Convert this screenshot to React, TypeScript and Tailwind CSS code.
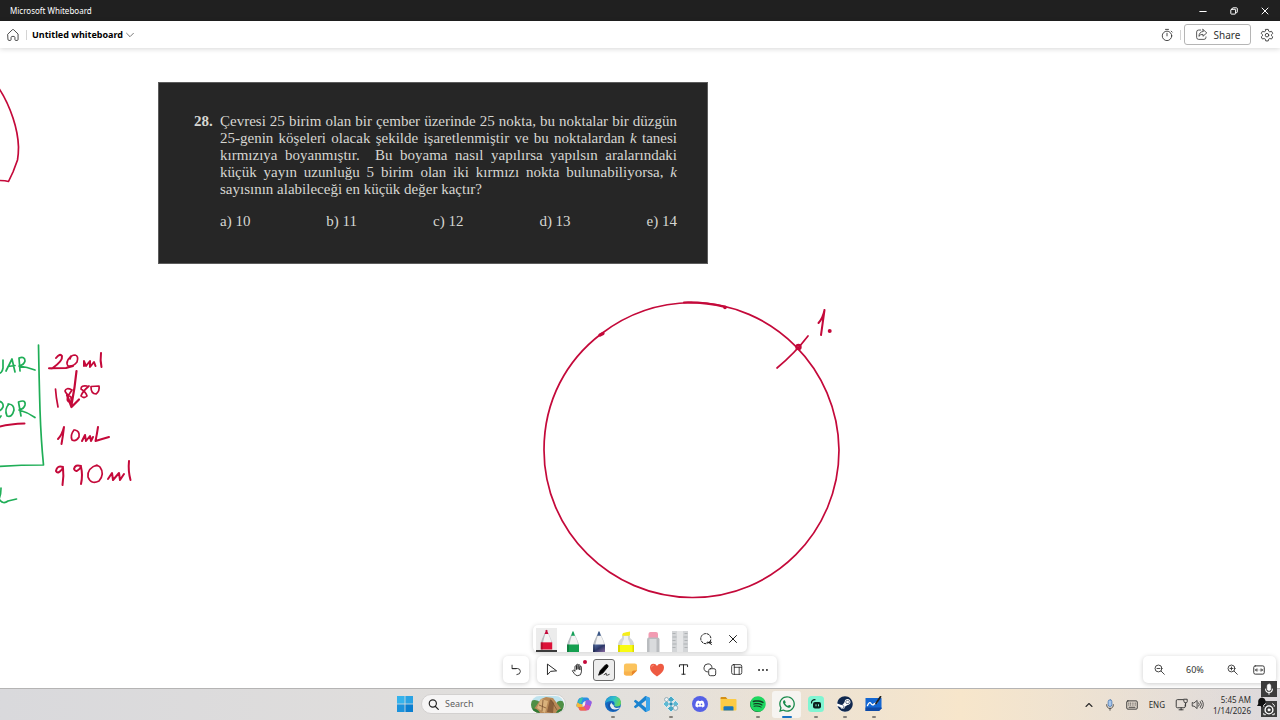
import type { ReactNode } from "react";
import { FaDiscord, FaSpotify, FaWhatsapp, FaSteam } from "react-icons/fa6";

const RED = "#c4093a";
const GREEN = "#1fae57";

const QUESTION_LINES: ReactNode[] = [
  "Çevresi 25 birim olan bir çember üzerinde 25 nokta, bu noktalar bir düzgün",
  <>25-genin köşeleri olacak şekilde işaretlenmiştir ve bu noktalardan <i>k</i> tanesi</>,
  "kırmızıya boyanmıştır.  Bu boyama nasıl yapılırsa yapılsın aralarındaki",
  <>küçük yayın uzunluğu 5 birim olan iki kırmızı nokta bulunabiliyorsa, <i>k</i></>,
];

const ANSWERS = ["a) 10", "b) 11", "c) 12", "d) 13", "e) 14"];

function Icon({ children, className = "w-4 h-4", box = 16 }: { children: ReactNode; className?: string; box?: number }) {
  return (
    <svg
      viewBox={`0 0 ${box} ${box}`}
      className={`${className} shrink-0`}
      fill="none"
      stroke="currentColor"
      strokeWidth="1"
      strokeLinecap="round"
      strokeLinejoin="round"
      aria-hidden="true"
    >
      {children}
    </svg>
  );
}

function TitleBar() {
  return (
    <div className="h-[21px] shrink-0 bg-[#202020] text-white flex items-center justify-between pl-[10px]">
      <span className="text-[8px] leading-3">Microsoft Whiteboard</span>
      <div className="flex items-center">
        <button aria-label="Minimize" className="w-[31px] h-[21px] flex items-center justify-center">
          <Icon className="w-2 h-2" box={8}>
            <path d="M0.8 4.5h6.4" />
          </Icon>
        </button>
        <button aria-label="Restore" className="w-[31px] h-[21px] flex items-center justify-center">
          <Icon className="w-2 h-2" box={8}>
            <rect x="0.8" y="2.3" width="4.8" height="4.8" rx="0.6" />
            <path d="M2.4 2.2V1.5q0-.7.7-.7h3.4q.8 0 .8.8v3.3q0 .7-.7.7H5.8" />
          </Icon>
        </button>
        <button aria-label="Close" className="w-[31px] h-[21px] flex items-center justify-center">
          <Icon className="w-2 h-2" box={8}>
            <path d="M1 1l6 6M7 1L1 7" />
          </Icon>
        </button>
      </div>
    </div>
  );
}

function Header() {
  return (
    <header className="relative z-10 h-[27px] shrink-0 bg-white shadow-[0_1px_5px_rgba(0,0,0,0.16)] flex items-center justify-between px-[6px] text-[#333333]">
      <div className="flex items-center">
        <button aria-label="Home">
          <Icon className="w-[14px] h-[14px]">
            <path d="M2.2 6.9 7.2 2q.8-.7 1.6 0l5 4.9v6.2q0 1.1-1.1 1.1h-1.5q-1 0-1-1v-2.4q0-1.3-2.2-1.3t-2.2 1.3v2.4q0 1-1 1H3.3q-1.1 0-1.1-1.1z" />
          </Icon>
        </button>
        <span className="ml-[6px] mr-[5px] w-px h-[10px] bg-[#d4d4d4]" />
        <button className="flex items-center gap-[3px] text-black">
          <span className="text-[9px] leading-4 font-bold">Untitled whiteboard</span>
          <Icon className="w-2 h-2 text-[#555555]" box={8}>
            <path d="M0.6 2.3 4 5.7l3.4-3.4" strokeWidth="0.8" />
          </Icon>
        </button>
      </div>
      <div className="flex items-center">
        <button aria-label="Timer">
          <Icon className="w-[14px] h-[14px]">
            <circle cx="8" cy="9" r="5.4" />
            <path d="M8 6V9M6.3 1.6h3.4M12.8 3.6l1.1 1.1" />
          </Icon>
        </button>
        <span className="ml-[6px] mr-[3px] w-px h-[10px] bg-[#d4d4d4]" />
        <button className="w-[67px] h-[21px] rounded-[3px] border border-[#b5b5b5] flex items-center justify-center gap-[6px]">
          <Icon className="w-[13px] h-[13px]">
            <path d="M7 2.5H4.5Q2 2.5 2 5v6.5Q2 14 4.5 14H11q2.5 0 2.5-2.5V11" />
            <path d="M9.8 1.8 14.5 6l-4.7 4.2V7.8Q6.5 7.6 4.8 10.3 5.2 4.6 9.8 4.3z" />
          </Icon>
          <span className="text-[10px] leading-4">Share</span>
        </button>
        <button aria-label="Settings" className="ml-[9px]">
          <Icon className="w-[14px] h-[14px]">
            <path d="M6.6 1.6h2.8l.5 2 1.3.8 2-.6 1.4 2.4-1.5 1.4v1.2l1.5 1.4-1.4 2.4-2-.6-1.300.8-.5 2H6.6l-.5-2-1.3-.8-2 .6-1.400-2.400 1.500-1.400V7.600L1.400 6.200l1.400-2.400 2 .6 1.300-.8z" />
            <circle cx="8" cy="8.200" r="2" />
          </Icon>
        </button>
      </div>
    </header>
  );
}

function QuestionCard() {
  return (
    <article className="absolute left-[158px] top-[34px] w-[550px] border border-[#5c5c5c] bg-[#262626] text-[#d6d6d2] pl-[35px] pr-[30px] pt-[30px] pb-[33px] font-['Liberation_Serif',serif] text-[15px] leading-[17px]">
      <div className="flex">
        <b className="w-[26px] shrink-0">28.</b>
        <div className="flex-1">
          {QUESTION_LINES.map((line, i) => (
            <p key={i} className="whitespace-pre-wrap [text-align-last:justify]">
              {line}
            </p>
          ))}
          <p>sayısının alabileceği en küçük değer kaçtır?</p>
          <div className="flex justify-between mt-[15px]">
            {ANSWERS.map((answer) => (
              <span key={answer}>{answer}</span>
            ))}
          </div>
        </div>
      </div>
    </article>
  );
}

// Pen strokes, in window coordinates: the view box starts under the two top bars
function Ink() {
  return (
    <svg
      viewBox="0 48 900 640"
      width="900"
      height="640"
      className="absolute left-0 top-0"
      fill="none"
      strokeWidth="1.7"
      strokeLinecap="round"
      strokeLinejoin="round"
      aria-hidden="true"
    >
      <g stroke={RED}>
        <path d="M-2 87Q7 100 13 118 18 133 18.5 147 18.5 154 17.5 160L13 172 8.5 181.5Q5 180.5-2 180.5" />
        <path d="M692 302.5C773 303 838 369 839 450 839 532 773 598 692 597.5 610 597 544 531 544 450 544 400 567 360 601 334 627 314 657 303 692 302.5" />
        <path d="M684 302.5Q706 302 725 307" strokeWidth="2.2" />
        <circle cx="725" cy="307.3" r="1" />
        <path d="M600 335l3-1.500" strokeWidth="3.200" />
        <path d="M777 368Q795 353 808 336" />
        <circle cx="798.500" cy="347" r="2" strokeWidth="2.400" />
        <path d="M818.500 323Q823 318 824.500 310L821 335" strokeWidth="2" />
        <circle cx="829.700" cy="331" r="1" strokeWidth="2" />
        {/* 20ml */}
        <path d="M56 358Q60 353 62 356 63 361 52 368.500L49 368.300Q58 368 66 368L73 366" strokeWidth="2" />
        <path d="M71 356Q65 362 68 366 73 367 77 362 79 356 75 355 71 355 70 359" />
        <path d="M84 366V361L86 366 90 361V367L94 362 95.500 366M101 353Q100 361 101.500 367" strokeWidth="2" />
        <path d="M76.500 371Q75 387 71.500 405M67 395 71.500 407 79 399.500M71.500 407V398" strokeWidth="2.200" />
        {/* 1880 */}
        <path d="M55.500 389Q56 397 58 407" />
        <path d="M72 390Q66 387 65 391 66 394 71 397 73 402 70 402 66 402 68 396L72 390" />
        <path d="M87 386Q81 385 81 389 86 392 87 396 84 399 81 396 82 392 89 386" />
        <path d="M91 386.500 99 386Q100 391 96 394 91 394 91 387" />
        {/* 10mL */}
        <path d="M58 439Q62 435 64 427 63 436 61.500 444" strokeWidth="2" />
        <path d="M74 430Q70 435 72 440 76 442 79 437 80 431 75 430" />
        <path d="M82 441 85 435 86 441 90 436 91 441 93 437M98 427Q97 434 95.500 441 102 439 109 437" strokeWidth="2" />
        {/* 990ml */}
        <path d="M63 467Q57 465 56 471 58 475 63 468 64 476 62.500 485" strokeWidth="2" />
        <path d="M81 466Q75 464 74 469 76 474 81 467 83 475 81 484" strokeWidth="2" />
        <path d="M97 465Q87 468 88 477 91 485 99 481 105 474 100 467 98 465 95 466" />
        <path d="M108 479 112 473 113 480 119 473 120 480 124 474M129 461Q128 471 130.500 480" strokeWidth="2" />
        <path d="M-2 427Q9 424 24.500 423.500" strokeWidth="2" />
      </g>
      <g stroke={GREEN}>
        <path d="M38.500 345Q39 375 40 410 41 440 43.500 465Q20 465-2 466.500" />
        <path d="M3 360V368Q2 374-2 373" />
        <path d="M6 371 12 359 15 372M8 366.500 15 365.500" />
        <path d="M20 371 19 358Q25 356 25 361 24 365 19 366 27 367 35 370" />
        <path d="M-2 401Q4 402 3 407 1 411-2 411M-2 420 1 416" />
        <path d="M9 404Q4 409 7 416 12 418 14 410 14 404 8 404" />
        <path d="M21 416 18.500 402Q26 399 25 405 24 409 19 410 27 412 35 417.500" />
        <path d="M1 488Q1 495-1 499 3 505 8 501L16.500 499" />
      </g>
    </svg>
  );
}

function Pen({ tip, band, body }: { tip: string; band: string; body: string }) {
  return (
    <svg viewBox="0 0 22 22" className="w-[22px] h-[22px]" aria-hidden="true">
      <path d="M5 22V15Q5.500 12 9 5h4q3.500 7 4 10v7z" fill={body} />
      <path d="M9 5Q6 11 5 15v7h2.500V14Q9 8 10 5z" fill="#b9bdc2" />
      <path d="M12.500 5q3 6 3.500 10h1Q16.500 12 13 5z" fill="#c8ccd0" />
      <path d="M9 5.800 10.400 1.800q.6-1.200 1.200 0L13 5.800z" fill={tip} />
      <path d="M5 14.500h12V22H5z" fill={band} />
      <path d="M5 14.500h2V22H5z" fill="#000000" opacity=".2" />
    </svg>
  );
}

function PenBar() {
  return (
    <div className="w-[214px] h-[27px] rounded-[5px] bg-white shadow-[0_1px_5px_rgba(0,0,0,0.2)] flex justify-between items-center px-[3px]">
      <button aria-label="Red pen" className="w-[21px] h-[24px] mt-[2px] bg-[#ececec] border-b-2 border-[#3b3b3b] flex items-end justify-center">
        <Pen tip="#c4093a" band="#dc1239" body="#f4f4f4" />
      </button>
      <button aria-label="Green pen" className="w-[22px] h-[26px] pt-[4px] overflow-hidden">
        <Pen tip="#16a05a" band="#15a050" body="#f4f4f4" />
      </button>
      <button aria-label="Galaxy pen" className="w-[22px] h-[26px] pt-[4px] overflow-hidden">
        <svg width="0" height="0" className="absolute">
          <linearGradient id="galaxy" x1="0" x2="1" y1="0" y2="1">
            <stop offset="0" stopColor="#5d78ad" />
            <stop offset=".5" stopColor="#2b3768" />
            <stop offset="1" stopColor="#8c6aa0" />
          </linearGradient>
        </svg>
        <Pen tip="#3a5685" band="url(#galaxy)" body="#f4f4f4" />
      </button>
      <button aria-label="Yellow highlighter" className="w-[22px] h-[26px] pt-[4px]">
        <svg viewBox="0 0 22 22" className="w-[22px] h-[22px]" aria-hidden="true">
          <path d="M7.500 6 8 3.500 14 2v4z" fill="#f3ea1c" />
          <path d="M7 5.500h8V8q4 3 4 7v7H3v-7q0-4 4-7z" fill="#d3d6d9" />
          <path d="M9 6h4v3q2 3 2 6H7q0-3 2-6z" fill="#f1f2f3" />
          <path d="M3 15h16v7H3z" fill="#f9fb13" />
          <path d="M3 15h2v7H3zM17.500 15H19v7h-1.500z" fill="#dcd900" />
          <path d="M7 5.500 8 3l7-1.500v4z" fill="#f6ee1a" />
        </svg>
      </button>
      <button aria-label="Eraser" className="w-[22px] h-[26px] pt-[4px]">
        <svg viewBox="0 0 22 22" className="w-[22px] h-[22px]" aria-hidden="true">
          <path d="M6.500 9V4q0-2 2-2H14q2 0 2 2v5z" fill="#f29bb2" />
          <path d="M5 9.500Q5 7.500 7 7.500h8.500q2 0 2 2V22H5z" fill="#b9bcbf" />
          <path d="M7.500 9h7v13h-7z" fill="#d9dbdd" />
        </svg>
      </button>
      <button aria-label="Ruler" className="w-[22px] h-[26px] pt-[4px]">
        <svg viewBox="0 0 22 22" className="w-[22px] h-[22px]" aria-hidden="true">
          <path d="M3 1h16v21H3z" fill="#d3d5d7" />
          <path d="M8 1h6v21H8z" fill="#e6e7e8" />
          <path d="M3.500 3.500h3M3.500 7h4M3.500 10.500h3M3.500 14h4M3.500 17.500h3M18.500 3.500h-3M18.500 7h-4M18.500 10.500h-3M18.500 14h-4M18.500 17.500h-3" stroke="#a6a9ac" strokeWidth=".8" />
        </svg>
      </button>
      <button aria-label="Lasso select" className="w-[22px] h-[22px] flex items-center justify-center">
        <Icon className="w-[14px] h-[14px]">
          <path d="M8 13.400A5.800 5.800 0 1 1 13.600 7.500" strokeDasharray="2.400 1.500" />
          <path d="M13.500 9q-.2 1.600-1.600 2.700-2.600 1.800-2.900.5 0-1.400 2-.3l3.200 2.300M11.900 11.700q1.800-1.100 2.300 0 .1 1.200-1.600.8" />
        </Icon>
      </button>
      <button aria-label="Close pens" className="w-[22px] h-[22px] flex items-center justify-center">
        <Icon className="w-[14px] h-[14px]">
          <path d="M4 4l8 8M12 4l-8 8" />
        </Icon>
      </button>
    </div>
  );
}

function Tool({ label, children, active = false }: { label: string; children: ReactNode; active?: boolean }) {
  return (
    <button
      aria-label={label}
      aria-pressed={active}
      className={`relative w-[22px] h-[22px] flex items-center justify-center ${
        active ? "rounded-[3px] border border-[#6b6b6b] bg-[#ededed]" : ""
      }`}
    >
      {children}
    </button>
  );
}

function MainTools() {
  return (
    <div className="flex gap-[8px] text-[#242424]">
      <div className="w-[26px] h-[27px] rounded-[5px] bg-white shadow-[0_1px_5px_rgba(0,0,0,0.2)] flex items-center justify-center">
        <Tool label="Undo">
          <Icon className="w-[14px] h-[14px]">
            <path d="M3.500 2.500v4H8M3.800 6.300h6q3.200.3 3.200 3.400 0 3.300-4 3.600" />
          </Icon>
        </Tool>
      </div>
      <div className="w-[240px] h-[27px] rounded-[5px] bg-white shadow-[0_1px_5px_rgba(0,0,0,0.2)] flex items-center justify-between px-[3px]">
        <Tool label="Select">
          <Icon className="w-[13px] h-[13px]">
            <path d="M3 1.800v12.700l3.900-4.200 6.900-.6z" strokeWidth="1.200" />
          </Icon>
        </Tool>
        <Tool label="Pan">
          <Icon className="w-[14px] h-[14px]">
            <path d="M4.500 9V4.200q0-1 .9-1t.9 1V7.500 2.400q0-1 .9-1t.9 1V7.300 2.800q0-1 1-1t1 1V8 4.700q0-1 .9-1t.9 1v5.400q0 4.400-4.200 4.400-2.500 0-3.800-2.200L1.500 8.900q1.300-1.500 3 .1" />
          </Icon>
          <span className="absolute right-[2px] top-px w-1 h-1 rounded-full bg-[#c4093a]" />
        </Tool>
        <Tool label="Inking" active>
          <Icon className="w-[14px] h-[14px]">
            <path d="M2 13.500 3.800 8.600 9.700 2.200q1.400-1 2.500.2 1 1.200 0 2.400L6.600 11.500z" fill="#000000" stroke="#000000" />
            <path d="M8 13.500q1.800-2.200 2.500-1.800.6.600-.3 1.900 1.300 1 3.800-.5" />
          </Icon>
        </Tool>
        <Tool label="Sticky note">
          <svg viewBox="0 0 16 16" className="w-[15px] h-[15px]" aria-hidden="true">
            <path d="M1 4q0-2.500 2.500-2.500h9Q15 1.500 15 4v5l-5.500 5.500h-6Q1 14.500 1 12z" fill="#fbc35c" />
            <path d="M1 10v2q0 2.500 2.500 2.500h6V10z" fill="#f9b24c" />
            <path d="M15 9h-3.500q-2 0-2 2v3.500z" fill="#e8862a" />
          </svg>
        </Tool>
        <Tool label="Reactions">
          <svg viewBox="0 0 16 16" className="w-4 h-4" aria-hidden="true">
            <path d="M8 14.500Q1 10 1 5.700 1 1.800 4.500 1.800 6.800 1.800 8 4q1.200-2.200 3.500-2.200Q15 1.800 15 5.700 15 10 8 14.500z" fill="#ee5a42" />
            <path d="M2.500 5q.3-1.700 2-1.800" stroke="#f78c75" strokeLinecap="round" fill="none" />
          </svg>
        </Tool>
        <Tool label="Text">
          <Icon className="w-[13px] h-[13px]">
            <path d="M3 4.500V2.200h10v2.300M8 2.200v11.600M6 13.800h4" strokeWidth="1.200" />
          </Icon>
        </Tool>
        <Tool label="Shapes">
          <Icon className="w-[14px] h-[14px]">
            <path d="M5.200 10.200A4.600 4.600 0 1 1 10.300 5.300" />
            <rect x="6.500" y="6.500" width="8" height="8" rx="2" />
          </Icon>
        </Tool>
        <Tool label="Templates">
          <Icon className="w-[13px] h-[13px]">
            <rect x="2" y="2" width="12.500" height="12" rx="2.200" />
            <path d="M5.300 2v12M5.300 5.300h9M11.300 5.300v8.700" />
          </Icon>
        </Tool>
        <Tool label="More options">
          <svg viewBox="0 0 16 16" className="w-[14px] h-[14px]" fill="currentColor" aria-hidden="true">
            <circle cx="3.500" cy="8" r="1.100" />
            <circle cx="8" cy="8" r="1.100" />
            <circle cx="12.500" cy="8" r="1.100" />
          </svg>
        </Tool>
      </div>
    </div>
  );
}

function ZoomBar() {
  return (
    <div className="absolute right-[4px] bottom-[5px] w-[133px] h-[27px] rounded-[5px] bg-white shadow-[0_1px_5px_rgba(0,0,0,0.2)] flex items-center justify-between px-[11px] text-[#333333]">
      <button aria-label="Zoom out">
        <Icon className="w-[11px] h-[11px]">
          <circle cx="6.500" cy="6.500" r="5" strokeWidth="1.300" />
          <path d="M10.300 10.300 15 15M4.300 6.500h4.400" strokeWidth="1.300" />
        </Icon>
      </button>
      <span className="ml-[6px] text-[9px] leading-4">60%</span>
      <button aria-label="Zoom in" className="ml-[8px]">
        <Icon className="w-[11px] h-[11px]">
          <circle cx="6.500" cy="6.500" r="5" strokeWidth="1.300" />
          <path d="M10.300 10.300 15 15M4.300 6.500h4.400M6.500 4.300v4.400" strokeWidth="1.300" />
        </Icon>
      </button>
      <button aria-label="Fit to screen">
        <Icon className="w-[12px] h-[12px]">
          <rect x="1" y="2.500" width="14" height="11" rx="2" strokeWidth="1.300" />
          <path d="M3.500 8h3M9.500 8h3M5 6.300 3.300 8 5 9.700M11 6.300 12.700 8 11 9.700" strokeWidth="1.200" />
        </Icon>
      </button>
    </div>
  );
}

function Board() {
  return (
    <main className="relative flex-1 overflow-hidden bg-white">
      <Ink />
      <QuestionCard />
      <div className="absolute inset-x-0 bottom-[5px] flex flex-col items-center gap-[4px]">
        <PenBar />
        <MainTools />
      </div>
      <ZoomBar />
    </main>
  );
}

function TaskbarApp({ label, state = "closed", children }: { label: string; state?: "closed" | "open" | "focused"; children: ReactNode }) {
  return (
    <button
      aria-label={label}
      className={`relative w-[29px] h-[27px] flex items-center justify-center ${
        state === "focused" ? "rounded-[3px] bg-[#f6f4f1]" : ""
      }`}
    >
      {children}
      {state === "open" && <span className="absolute bottom-0 w-1 h-[2px] rounded-full bg-[#85807a]" />}
      {state === "focused" && <span className="absolute bottom-0 w-[10px] h-[2px] rounded-full bg-[#1672c4]" />}
    </button>
  );
}

function SearchBox() {
  return (
    <label className="ml-[2px] mr-[3px] w-[145px] h-5 rounded-full border border-[#d3d1d0] bg-[#f6f5f5] flex items-center pl-[6px] pr-px">
      <Icon className="w-[11px] h-[11px] text-[#222222]">
        <circle cx="7" cy="6.500" r="5.200" strokeWidth="1.700" />
        <path d="M10.500 10.500 15 15" strokeWidth="1.700" />
      </Icon>
      <input
        type="search"
        aria-label="Search"
        placeholder="Search"
        className="ml-[6px] min-w-0 flex-1 bg-transparent text-[9px] leading-4 outline-none placeholder:text-[#5f5f5f]"
      />
      <svg viewBox="0 0 33 17" className="w-[33px] h-[17px] shrink-0" aria-hidden="true">
        <clipPath id="pill">
          <rect width="33" height="17" rx="8.500" />
        </clipPath>
        <g clipPath="url(#pill)">
          <path d="M0 0h33v17H0z" fill="#bfe3ee" />
          <path d="M0 5Q5 2 10 7L8 17H0zM26 6q5-3 7 1v10h-9z" fill="#4f8f45" />
          <path d="M3 13 10 3 15 1 22 2 31 14 28 17H3z" fill="#b98a57" />
          <path d="M10 3 6 12 14 17 17 5z" fill="#d9b27c" />
          <path d="M19 3 16 16 22 17 23 7z" fill="#8a5f3a" />
          <path d="M12 4 11 15M20 4 26 14M8 9l7 3" stroke="#7b5432" strokeWidth=".8" />
          <path d="M0 13q6-2 9 4H0zM25 17q2-5 8-4v4z" fill="#2f7a35" />
        </g>
      </svg>
    </label>
  );
}

function TaskbarApps() {
  return (
    <div className="flex items-center pr-[2px] pb-px">
      <TaskbarApp label="Start">
        <svg viewBox="0 0 16 16" className="w-4 h-4" aria-hidden="true">
          <path d="M0 0h7.600v7.600H0z" fill="#35b3ec" />
          <path d="M8.400 0H16v7.600H8.400z" fill="#2aa3e4" />
          <path d="M0 8.400h7.600V16H0z" fill="#1c93dc" />
          <path d="M8.400 8.400H16V16H8.400z" fill="#0b7fd0" />
        </svg>
      </TaskbarApp>
      <SearchBox />
      <TaskbarApp label="Copilot">
        <svg viewBox="0 0 16 16" className="w-4 h-4" aria-hidden="true">
          <path d="M5.500 1.500H11q1.500 0 2 1.500l.6 2H9.300Q8 5 7.500 6.500L6 11.500H2.500Q-.2 11.500.6 8.500L2 4q.8-2.500 3.500-2.500z" fill="#2b8fe6" />
          <path d="M2.500 11.500Q-.2 11.500.6 8.500l.7-2.300q2 1.800 5.700 2.300l-.9 3z" fill="#f5b93a" />
          <path d="M3.500 3Q5 1 7 1.500L5 8 2 6z" fill="#38c4a8" />
          <path d="M10.500 14.500H5q-1.500 0-2-1.500l-.6-2h4.300Q8 11 8.500 9.500L10 4.500h3.500q2.700 0 1.900 3L14 12q-.8 2.500-3.500 2.500z" fill="#d84fb0" />
          <path d="M10 4.500h3.500q2.700 0 1.900 3l-.8 2.500L9 8z" fill="#8b62e8" />
          <path d="M10.500 14.500H5q-1.500 0-2-1.500l-.6-2h4.300L8 10.500z" fill="#f2703d" />
          <path d="M7 6.500h2.500L8.700 9.600H6.200z" fill="#f3efee" />
        </svg>
      </TaskbarApp>
      <TaskbarApp label="Microsoft Edge" state="open">
        <svg viewBox="0 0 16 16" className="w-4 h-4" aria-hidden="true">
          <linearGradient id="edge" x1="0" y1="0" x2="1" y2=".3">
            <stop offset="0" stopColor="#1f8fd8" />
            <stop offset=".6" stopColor="#30c2c8" />
            <stop offset="1" stopColor="#66d661" />
          </linearGradient>
          <circle cx="8" cy="8" r="8" fill="#1469c2" />
          <path d="M0 7.500Q1 0 8 0q7.500.3 8 6.500 0 4-4 4-3.500 0-2.500-2Q10 5 6.500 5 2 5 0 7.500z" fill="url(#edge)" />
          <path d="M6.300 6.600Q3.800 9 6 12.300 8.500 15 14 12.500q1-.3.500-1Q9 13 8.500 9 6.500 8.500 6.300 6.600z" fill="#e9edf0" />
          <path d="M6.300 6.600Q3.800 9 6 12.300 8.500 15 13.500 13 9 16.500 5 13.500 1.500 10 4 7z" fill="#1b55a5" />
        </svg>
      </TaskbarApp>
      <TaskbarApp label="Visual Studio Code">
        <svg viewBox="0 0 24 24" className="w-4 h-4" aria-hidden="true">
          <path
            d="M23.150 2.587L18.210.21a1.494 1.494 0 0 0-1.705.29l-9.460 8.630-4.120-3.128a.999.999 0 0 0-1.276.057L.327 7.261A1 1 0 0 0 .326 8.740L3.899 12 .326 15.260a1 1 0 0 0 .001 1.479L1.650 17.940a.999.999 0 0 0 1.276.057l4.120-3.128 9.460 8.630a1.492 1.492 0 0 0 1.704.29l4.942-2.377A1.500 1.500 0 0 0 24 20.060V3.939a1.500 1.500 0 0 0-.85-1.352zm-5.146 14.861L10.826 12l7.178-5.448v10.896z"
            fill="#1b83cf"
          />
          <path d="M18 .2 24 3v18l-6 3z" fill="#3aa5ec" />
        </svg>
      </TaskbarApp>
      <TaskbarApp label="Network tool" state="open">
        <svg viewBox="0 0 16 16" className="w-4 h-4" aria-hidden="true">
          <g stroke="#f2f8fa" strokeWidth=".7">
            <path d="M8 0 11.500 3.500 8 7 4.500 3.500z" fill="#47a9c6" />
            <path d="M8 9 11.500 12.500 8 16 4.500 12.500z" fill="#47a9c6" />
            <path d="M3.500 4.500 7 8 3.500 11.500 0 8z" fill="#5fb9d2" />
            <path d="M12.500 4.500 16 8 12.500 11.500 9 8z" fill="#5fb9d2" />
            <path d="M8 5.500 10.500 8 8 10.500 5.500 8z" fill="#2b8db2" />
          </g>
          <circle cx="3.500" cy="3.500" r="2" fill="#edf2f4" stroke="#7b99a6" strokeWidth=".7" />
          <circle cx="12.500" cy="12" r="2.300" fill="#edf2f4" stroke="#7b99a6" strokeWidth=".7" />
        </svg>
      </TaskbarApp>
      <TaskbarApp label="Discord">
        <span className="w-4 h-4 rounded-full bg-[#5561e6] flex items-center justify-center">
          <FaDiscord className="w-[10px] h-[10px] text-white" />
        </span>
      </TaskbarApp>
      <TaskbarApp label="File Explorer">
        <svg viewBox="0 0 17 16" className="w-[17px] h-4" aria-hidden="true">
          <path d="M.5 2Q.5 1 1.500 1h4.300l1.700 2H.5z" fill="#d58f14" />
          <path d="M.5 3h15q1 0 1 1v9.500q0 1-1 1h-14q-1 0-1-1z" fill="#fccb45" />
          <path d="M3.500 14.500V11.500q0-1.200 1.200-1.200h7.600q1.200 0 1.200 1.200v3z" fill="#1b76bb" />
        </svg>
      </TaskbarApp>
      <TaskbarApp label="Spotify" state="open">
        <span className="w-[15px] h-[15px] rounded-full bg-[#123d22] flex items-center justify-center">
          <FaSpotify className="w-4 h-4 shrink-0 text-[#1ed760]" />
        </span>
      </TaskbarApp>
      <TaskbarApp label="WhatsApp" state="focused">
        <FaWhatsapp className="w-[18px] h-[18px] text-[#188a4b]" />
      </TaskbarApp>
      <TaskbarApp label="Streamlabs" state="open">
        <svg viewBox="0 0 16 16" className="w-4 h-4" aria-hidden="true">
          <rect width="16" height="16" rx="3.500" fill="#80f5d2" />
          <rect x="5" y="6" width="8" height="6.500" rx="2" fill="#0c1f1c" />
          <path d="M3.500 7Q3.500 4 7 3.700" stroke="#0c1f1c" strokeWidth="1.200" fill="none" strokeLinecap="round" />
          <path d="M8 8.300v2M10.500 8.300v2" stroke="#80f5d2" strokeWidth="1" />
        </svg>
      </TaskbarApp>
      <TaskbarApp label="Steam" state="open">
        <span className="w-[15px] h-[15px] rounded-full bg-white flex items-center justify-center">
          <FaSteam className="w-4 h-4 shrink-0 text-[#10284f]" />
        </span>
      </TaskbarApp>
      <TaskbarApp label="Whiteboard" state="open">
        <svg viewBox="0 0 17 16" className="w-[17px] h-4" aria-hidden="true">
          <path d="M.5 2h16v10.500L14 15H.5z" fill="#1467d2" />
          <path d="M.5 11.500h16v1L14 15H.5z" fill="#0d49a6" />
          <path d="M2.500 9.500Q4.500 5 6 7.500t3 .5l3-1.500" stroke="#ffffff" strokeWidth="1.400" fill="none" strokeLinecap="round" />
          <path d="M11 7.500 15.500.8" stroke="#222222" strokeWidth="1.800" strokeLinecap="round" />
        </svg>
      </TaskbarApp>
    </div>
  );
}

function Tray() {
  return (
    <div className="flex items-center justify-end pr-[29px] text-[#2b2b2b]">
      <button aria-label="Show hidden icons">
        <Icon className="w-2 h-2" box={8}>
          <path d="M1 5.500 4 2.500l3 3" strokeWidth="1.100" />
        </Icon>
      </button>
      <button aria-label="Microphone" className="ml-[11px]">
        <Icon className="w-3 h-3">
          <rect x="5.500" y="1" width="5" height="9" rx="2.500" fill="#a9c8ec" stroke="#3f6fae" />
          <path d="M3.500 7.500q0 5 4.500 5t4.500-5M8 12.500V15" />
        </Icon>
      </button>
      <button aria-label="Touch keyboard" className="ml-[10px]">
        <Icon className="w-3 h-3">
          <rect x="1" y="2.500" width="14" height="11" rx="1.500" strokeWidth="1.200" />
          <path d="M3.500 5.500h.5M6 5.500h.5M9 5.500h.5M12 5.500h.5M3.500 8h.5M6 8h.5M9 8h.5M12 8h.5M4 11h8" strokeWidth="1.200" />
        </Icon>
      </button>
      <button className="ml-[11px] text-[8px] leading-3">ENG</button>
      <button aria-label="Network and volume" className="ml-[10px] flex items-center gap-[3px]">
        <Icon className="w-[13px] h-[13px]">
          <path d="M9.500 2H3Q1.500 2 1.500 3.500v7Q1.500 12 3 12h8q1.500 0 1.500-1.500V8.500M5 14.500h5M7.500 12v2.500M11 1.500h4v3q0 1.500-2 1.500t-2-1.500zM13 6v4" strokeWidth="1.100" />
        </Icon>
        <Icon className="w-[13px] h-[13px]">
          <path d="M1.500 6v4h2.300L7.500 13V3L3.800 6zM9.500 6q1.500 2 0 4M11.500 4.300q3 3.700 0 7.400M13.300 2.800q4 5.200 0 10.400" />
        </Icon>
      </button>
      <button className="ml-[9px] w-[38px] whitespace-nowrap text-right text-[8px] leading-[11px]">
        <span className="block">5:45 AM</span>
        <span className="block">1/14/2026</span>
      </button>
    </div>
  );
}

function RecorderBadges() {
  return (
    <div className="absolute right-[3px] bottom-[3px] z-20 flex flex-col gap-[4px] text-white">
      <button aria-label="Recorder microphone" className="w-4 h-4 bg-[#3c3c3c] flex items-center justify-center">
        <Icon className="w-3 h-3">
          <rect x="5.700" y="1.500" width="4.600" height="8.500" rx="2.300" fill="#ffffff" />
          <path d="M3.500 8q0 4.500 4.500 4.500T12.500 8M8 12.500V15" strokeWidth="1.400" />
        </Icon>
      </button>
      <button aria-label="Recorder camera" className="relative w-4 h-4 bg-[#3c3c3c] flex items-center justify-center">
        <svg viewBox="0 0 10 12" className="absolute -left-1 -top-1 w-[10px] h-3" aria-hidden="true">
          <path d="M0 9 1.200 7V4Q1.500 1 5 .5q3 .5 3.500 3v4L9.500 9H6.500Q5 11 3.500 9z" fill="#111111" />
        </svg>
        <Icon className="relative w-[14px] h-[14px]">
          <circle cx="8" cy="9" r="4.500" strokeWidth="1.500" />
          <circle cx="8" cy="9" r="1.200" fill="#ffffff" />
          <path d="M2 5V3.500L4 2M14 5V3.500L12 2M2 13v1.500h2M14 13v1.500h-2" />
        </Icon>
      </button>
    </div>
  );
}

export default function App() {
  return (
    <div className="relative h-screen flex flex-col overflow-hidden font-['Noto_Sans','Open_Sans',sans-serif]">
      <TitleBar />
      <Header />
      <Board />
      <footer className="h-8 shrink-0 border-t border-[#b5b4b4] bg-linear-to-r from-[#d9d9dc] via-[#e3e0dc] via-50% to-[#dcd9dd]">
        <div className="h-full grid grid-cols-[1fr_auto_1fr] items-center bg-linear-to-r from-transparent from-50% via-[#f7e6cb] via-75% to-transparent">
          <div />
          <TaskbarApps />
          <Tray />
        </div>
      </footer>
      <RecorderBadges />
    </div>
  );
}
